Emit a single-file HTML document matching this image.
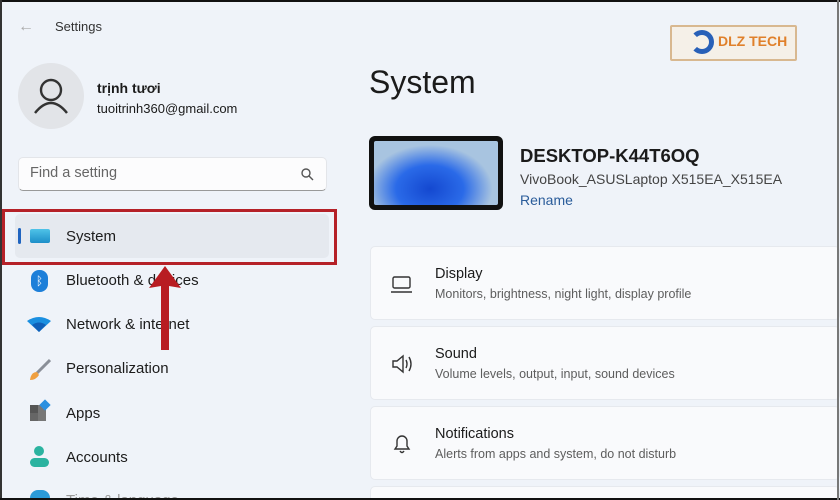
<!DOCTYPE html>
<html><head><meta charset="utf-8"><style>
*{margin:0;padding:0;box-sizing:border-box}
html,body{width:840px;height:500px;overflow:hidden}
body{background:#eff3f9;font-family:"Segoe UI","Liberation Sans","Noto Sans CJK SC",sans-serif;color:#1b1b1b}
#w{position:relative;width:840px;height:500px;overflow:hidden}
.a{position:absolute}
.nav{position:absolute;left:66px;font-size:15px;color:#1c1c1c}
.card{position:absolute;left:370px;width:470px;height:74px;background:#f9fafc;border:1px solid #e6e9ee;border-radius:5px}
.card .t{position:absolute;left:64px;top:19px;font-size:14.5px}
.card .s{position:absolute;left:64px;top:40px;font-size:12.5px;color:#5d5d5d}
</style></head><body><div id="w">

<div class="a" style="left:18px;top:18px;font-size:16px;color:#aaa">←</div>
<div class="a" style="left:55px;top:19px;font-size:13px;color:#333">Settings</div>

<div class="a" style="left:18px;top:63px;width:66px;height:66px;border-radius:50%;background:#e2e4e8"></div>
<svg class="a" style="left:18px;top:63px" width="66" height="66"><circle cx="33" cy="27" r="10" fill="none" stroke="#333" stroke-width="2.4"/><path d="M17 50 Q33 30 49 50" fill="none" stroke="#333" stroke-width="2.4"/></svg>
<div class="a" style="left:97px;top:80px;font-size:14px;font-weight:bold">trịnh tươi</div>
<div class="a" style="left:97px;top:101px;font-size:13px">tuoitrinh360@gmail.com</div>

<div class="a" style="left:18px;top:157px;width:309px;height:34px;background:#fcfcfd;border:1px solid #e3e5e9;border-bottom:1px solid #999;border-radius:5px"></div>
<div class="a" style="left:30px;top:165px;font-size:14.5px;color:#666">Find a setting</div>
<svg class="a" style="left:300px;top:167px" width="14" height="14"><circle cx="6" cy="6" r="4" fill="none" stroke="#555" stroke-width="1.4"/><path d="M9 9l4 4" stroke="#555" stroke-width="1.4"/></svg>

<div class="a" style="left:15px;top:214px;width:314px;height:44px;background:#e5e9ef;border-radius:5px"></div>
<div class="a" style="left:2px;top:209px;width:335px;height:56px;border:3px solid #b52128"></div>
<div class="a" style="left:18px;top:228px;width:3px;height:16px;background:#1f64c0;border-radius:2px"></div>
<div class="a" style="left:30px;top:229px;width:20px;height:14px;background:linear-gradient(#4fc3e8,#1c8ec8);border-radius:2px"></div>
<div class="nav" style="top:228px">System</div>

<div class="a" style="left:31px;top:270px;width:17px;height:22px;border-radius:8px;background:#1d7fd9;color:#fff;font-size:12px;text-align:center;line-height:22px">ᛒ</div>
<div class="nav" style="top:272px">Bluetooth &amp; devices</div>
<svg class="a" style="left:27px;top:316px" width="24" height="16"><path d="M0 5 Q12 -3 24 5 L12 16Z" fill="#1a8fe0"/><path d="M5 9 Q12 4 19 9 L12 16Z" fill="#0f5fb8"/></svg>
<div class="nav" style="top:316px">Network &amp; internet</div>
<svg class="a" style="left:27px;top:358px" width="24" height="24"><path d="M23 2 L10 15" stroke="#8a8f98" stroke-width="3"/><path d="M10 14 Q4 14 3 22 Q9 22 12 17Z" fill="#f0a040"/></svg>
<div class="nav" style="top:360px">Personalization</div>
<div class="a" style="left:30px;top:405px;width:8px;height:8px;background:#555"></div>
<div class="a" style="left:30px;top:413px;width:16px;height:8px;background:#666"></div>
<div class="a" style="left:38px;top:405px;width:8px;height:16px;background:#777"></div>
<div class="a" style="left:41px;top:401px;width:8px;height:8px;background:#2a90e0;transform:rotate(45deg)"></div>
<div class="nav" style="top:405px">Apps</div>
<div class="a" style="left:34px;top:446px;width:10px;height:10px;border-radius:50%;background:#2bb3a0"></div>
<div class="a" style="left:30px;top:458px;width:19px;height:9px;border-radius:5px;background:#2bb3a0"></div>
<div class="nav" style="top:449px">Accounts</div>
<div class="a" style="left:30px;top:490px;width:20px;height:8px;border-radius:10px 10px 0 0;background:#2b9bd8"></div>
<div class="nav" style="top:492px;height:6px;overflow:hidden;color:#999;line-height:18px">Time &amp; language</div>

<svg class="a" style="left:145px;top:262px" width="40" height="90"><path d="M20 4 L36 26 L24 24 L24 88 L16 88 L16 24 L4 26 Z" fill="#b81c22"/></svg>

<div class="a" style="left:670px;top:25px;width:127px;height:36px;background:#f5f0e8;border:2px solid #d8b890;border-radius:2px"></div>
<div class="a" style="left:690px;top:30px;width:24px;height:24px;border-radius:50%;border:5px solid #2860b8;border-left-color:transparent"></div>
<div class="a" style="left:718px;top:33px;font-size:14px;font-weight:bold;color:#e0802a">DLZ TECH</div>

<div class="a" style="left:369px;top:64px;font-size:32px">System</div>
<div class="a" style="left:369px;top:136px;width:134px;height:74px;background:#111;border-radius:6px"></div>
<div class="a" style="left:374px;top:141px;width:124px;height:64px;background:radial-gradient(ellipse at 45% 75%,#1448d0 0%,#2a6ae8 35%,#a8c4e0 65%);border-radius:2px"></div>
<div class="a" style="left:520px;top:145px;font-size:18.5px;font-weight:bold">DESKTOP-K44T6OQ</div>
<div class="a" style="left:520px;top:171px;font-size:14px;color:#444">VivoBook_ASUSLaptop X515EA_X515EA</div>
<div class="a" style="left:520px;top:192px;font-size:14px;color:#2a5c9a">Rename</div>

<div class="card" style="top:246px">
<svg class="a" style="left:20px;top:28px" width="24" height="20"><rect x="2" y="2" width="17" height="11" rx="1.5" fill="none" stroke="#333" stroke-width="1.4"/><path d="M0 17h21" stroke="#333" stroke-width="1.4"/></svg>
<div class="t">Display</div><div class="s">Monitors, brightness, night light, display profile</div></div>
<div class="card" style="top:326px">
<svg class="a" style="left:20px;top:26px" width="24" height="22"><path d="M2 8h4l6-5v16l-6-5H2z" fill="none" stroke="#333" stroke-width="1.4"/><path d="M15 7q2 4 0 8M18 4q4 7 0 14" fill="none" stroke="#333" stroke-width="1.4"/></svg>
<div class="t">Sound</div><div class="s">Volume levels, output, input, sound devices</div></div>
<div class="card" style="top:406px">
<svg class="a" style="left:20px;top:25px" width="24" height="24"><path d="M4 17h14l-2-3V9a5 5 0 0 0-10 0v5z" fill="none" stroke="#333" stroke-width="1.4"/><path d="M9 19q2 3 4 0" fill="none" stroke="#333" stroke-width="1.4"/></svg>
<div class="t">Notifications</div><div class="s">Alerts from apps and system, do not disturb</div></div>
<div class="card" style="top:486px;height:12px;border-bottom:none;border-radius:5px 5px 0 0"></div>

<div class="a" style="left:0;top:0;width:840px;height:2px;background:#111"></div>
<div class="a" style="left:0;top:0;width:2px;height:500px;background:#333"></div>
<div class="a" style="left:0;top:498px;width:840px;height:2px;background:#111"></div>
<div class="a" style="left:837px;top:0;width:2px;height:500px;background:#777"></div>
</div></body></html>
